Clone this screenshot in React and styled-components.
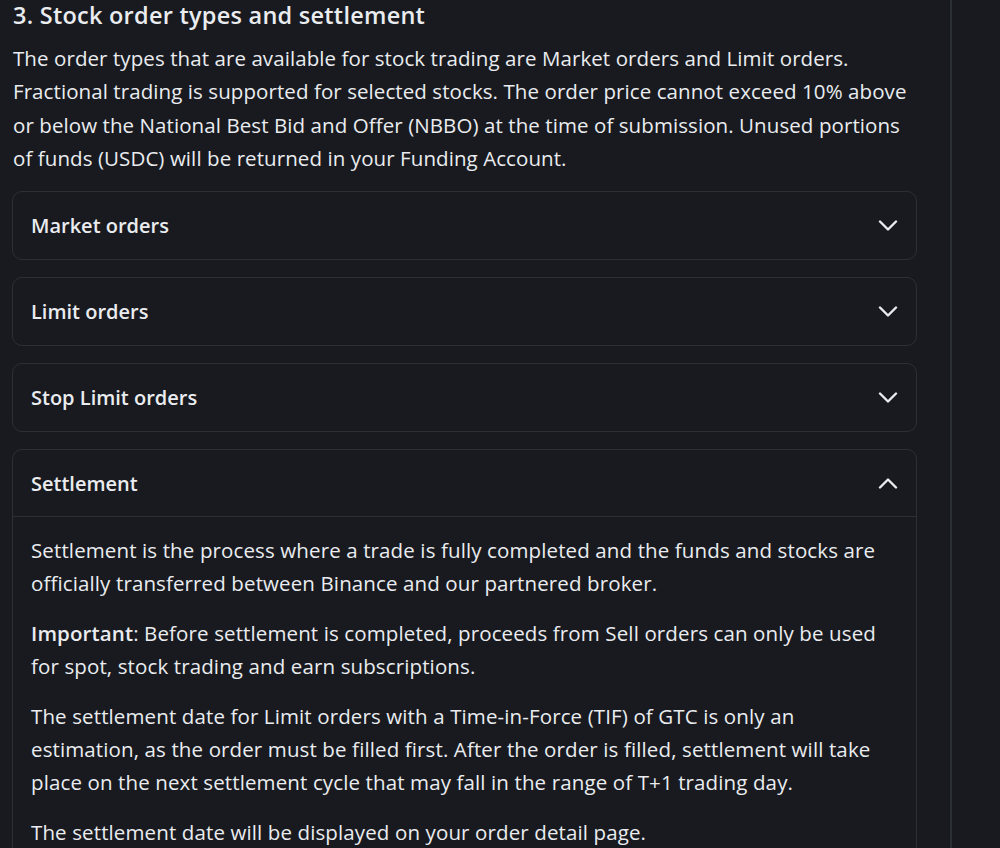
import React, { useState } from "react";
import styled, { createGlobalStyle } from "styled-components";

const GlobalStyle = createGlobalStyle`
  html, body {
    margin: 0;
    padding: 0;
    background: #181a20;
  }
  body {
    font-family: "Open Sans", "Liberation Sans", sans-serif;
    color: #eaecef;
  }
`;

const items = [
  { id: "market", title: "Market orders" },
  { id: "limit", title: "Limit orders" },
  { id: "stop", title: "Stop Limit orders" },
  { id: "settlement", title: "Settlement" },
];

const Chevron = ({ up }) => (
  <svg width="20" height="12" viewBox="0 0 20 12" fill="none">
    <path
      d={up ? "M2 10.5L10 2.5L18 10.5" : "M2 1.5L10 9.5L18 1.5"}
      stroke="#eaecef"
      strokeWidth="2.4"
      strokeLinecap="round"
      strokeLinejoin="round"
    />
  </svg>
);

const SettlementBody = () => (
  <>
    <Paragraph>
      Settlement is the process where a trade is fully completed and the funds
      and stocks are officially transferred between Binance and our partnered
      broker.
    </Paragraph>
    <Paragraph>
      <strong>Important</strong>: Before settlement is completed, proceeds from
      Sell orders can only be used for spot, stock trading and earn
      subscriptions.
    </Paragraph>
    <Paragraph>
      The settlement date for Limit orders with a Time-in-Force (TIF) of GTC is
      only an estimation, as the order must be filled first. After the order is
      filled, settlement will take place on the next settlement cycle that may
      fall in the range of T+1 trading day.
    </Paragraph>
    <Paragraph>
      The settlement date will be displayed on your order detail page.
    </Paragraph>
  </>
);

const App = () => {
  const [open, setOpen] = useState("settlement");

  return (
    <>
      <GlobalStyle />
      <Page>
        <Article>
          <Heading>3. Stock order types and settlement</Heading>
          <Intro>
            The order types that are available for stock trading are Market
            orders and Limit orders. Fractional trading is supported for
            selected stocks. The order price cannot exceed 10% above or below
            the National Best Bid and Offer (NBBO) at the time of submission.
            Unused portions of funds (USDC) will be returned in your Funding
            Account.
          </Intro>
          <List>
            {items.map((item) => {
              const isOpen = open === item.id;
              return (
                <Panel key={item.id}>
                  <PanelHeader
                    $open={isOpen}
                    onClick={() => setOpen(isOpen ? null : item.id)}
                  >
                    <PanelTitle>{item.title}</PanelTitle>
                    <Chevron up={isOpen} />
                  </PanelHeader>
                  {isOpen && item.id === "settlement" && (
                    <PanelBody>
                      <SettlementBody />
                    </PanelBody>
                  )}
                </Panel>
              );
            })}
          </List>
        </Article>
        <Divider />
      </Page>
    </>
  );
};

export default App;

const Page = styled.div`
  display: flex;
  height: 848px;
  overflow: hidden;
`;

const Article = styled.main`
  width: 905px;
  padding-left: 12px;
`;

const Divider = styled.div`
  margin-left: 33px;
  width: 2px;
  background: #2b2f36;
`;

const Heading = styled.h2`
  margin: 0 0 0 1px;
  font-size: 23.5px;
  line-height: 30px;
  font-weight: 600;
  letter-spacing: 0.25px;
  color: #eaecef;
`;

const Intro = styled.p`
  margin: 12px 0 0 1px;
  font-size: 20.5px;
  line-height: 33.3px;
  font-weight: 400;
  letter-spacing: 0.08px;
  color: #eaecef;
`;

const List = styled.div`
  display: flex;
  flex-direction: column;
  gap: 17px;
  margin-top: 16px;
`;

const Panel = styled.section`
  border: 1px solid #2b2f36;
  border-radius: 10px;
  overflow: hidden;
`;

const PanelHeader = styled.button`
  display: flex;
  width: 100%;
  height: 67px;
  align-items: center;
  justify-content: space-between;
  padding: 0 18px;
  background: transparent;
  border: none;
  border-bottom: ${(p) => (p.$open ? "1px solid #2b2f36" : "none")};
  color: #eaecef;
  cursor: pointer;
  font-family: inherit;
`;

const PanelTitle = styled.span`
  font-size: 20px;
  font-weight: 600;
`;

const PanelBody = styled.div`
  padding: 17px 18px 20px;
`;

const Paragraph = styled.p`
  margin: 0 0 17px;
  font-size: 20.5px;
  line-height: 33px;
  letter-spacing: 0.12px;
  color: #eaecef;

  strong {
    font-weight: 600;
  }
`;
